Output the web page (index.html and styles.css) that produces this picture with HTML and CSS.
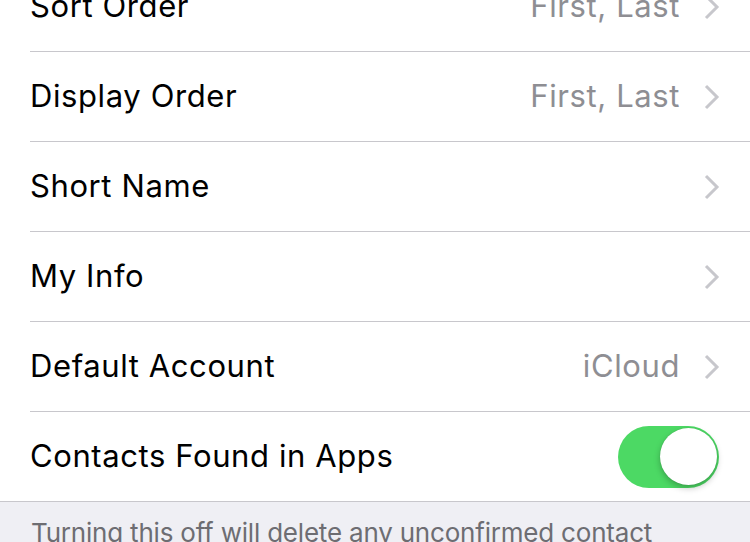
FILE: index.html
```html
<!DOCTYPE html>
<html>
<head>
<meta charset="utf-8">
<link rel="stylesheet" href="styles.css">
</head>
<body>
<div class="screen">
  <ul class="list">
    <li class="row"><span class="label">Sort Order</span><span class="value">First, Last</span><span class="chev"><svg width="16" height="26" viewBox="0 0 16 26"><path d="M2 2 L13 13 L2 24" fill="none" stroke="#c7c7cc" stroke-width="3"/></svg></span></li>
    <li class="row"><span class="label">Display Order</span><span class="value">First, Last</span><span class="chev"><svg width="16" height="26" viewBox="0 0 16 26"><path d="M2 2 L13 13 L2 24" fill="none" stroke="#c7c7cc" stroke-width="3"/></svg></span></li>
    <li class="row"><span class="label">Short Name</span><span class="chev"><svg width="16" height="26" viewBox="0 0 16 26"><path d="M2 2 L13 13 L2 24" fill="none" stroke="#c7c7cc" stroke-width="3"/></svg></span></li>
    <li class="row"><span class="label">My Info</span><span class="chev"><svg width="16" height="26" viewBox="0 0 16 26"><path d="M2 2 L13 13 L2 24" fill="none" stroke="#c7c7cc" stroke-width="3"/></svg></span></li>
    <li class="row"><span class="label">Default Account</span><span class="value">iCloud</span><span class="chev"><svg width="16" height="26" viewBox="0 0 16 26"><path d="M2 2 L13 13 L2 24" fill="none" stroke="#c7c7cc" stroke-width="3"/></svg></span></li>
    <li class="row last"><span class="label">Contacts Found in Apps</span><span class="toggle"><span class="knob"></span></span></li>
  </ul>
  <div class="footer">Turning this off will delete any unconfirmed contact suggestions.</div>
</div>
</body>
</html>
```
FILE: styles.css
```css
html, body {
  margin: 0;
  padding: 0;
  background: #ffffff;
  overflow: hidden;
}
.screen {
  width: 750px;
  height: 542px;
  overflow: hidden;
  font-family: Inter, "Noto Sans", sans-serif;
}
.list {
  list-style: none;
  margin: -38px 0 0 0;
  padding: 0 0 0 30px;
  background: #fff;
  border-bottom: 1px solid #c8c7cc;
}
.row {
  height: 89px;
  display: flex;
  align-items: center;
  border-bottom: 1px solid #c8c7cc;
  padding-right: 30px;
}
.row.last {
  border-bottom: none;
}
.label {
  flex: 1;
  font-size: 31px;
  color: #000;
  letter-spacing: 0.6px;
  padding-bottom: 2px;
}
.value {
  font-size: 31px;
  color: #8e8e93;
  letter-spacing: 0.6px;
  margin-right: 24px;
  padding-bottom: 2px;
}
.chev {
  display: flex;
  width: 16px;
}
.toggle {
  width: 101px;
  height: 62px;
  border-radius: 31px;
  background: #4cd964;
  display: flex;
  align-items: center;
  justify-content: flex-end;
  padding-right: 2px;
  box-sizing: border-box;
  margin-right: 1px;
}
.knob {
  width: 57px;
  height: 57px;
  border-radius: 50%;
  background: #fff;
  box-shadow: 0 3px 6px rgba(0,0,0,0.25), 0 0 1px rgba(0,0,0,0.2);
}
.footer {
  background: #efeff4;
  color: #6d6d72;
  font-size: 26px;
  letter-spacing: -0.2px;
  padding: 15px 30px 0 31px;
  height: 200px;
}
```
